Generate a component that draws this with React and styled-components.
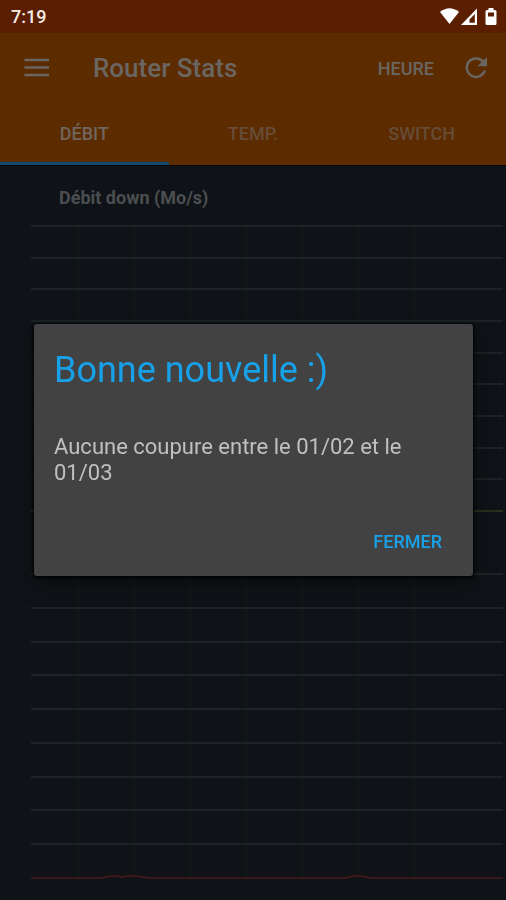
import { useState } from "react";
import styled, { createGlobalStyle } from "styled-components";

const GlobalStyle = createGlobalStyle`
  * {
    box-sizing: border-box;
  }
  body {
    margin: 0;
    background: #0f1317;
    font-family: Roboto, "Open Sans", sans-serif;
  }
  button {
    border: none;
    padding: 0;
    background: none;
    font-family: inherit;
    cursor: pointer;
  }
  h1, h2, p {
    margin: 0;
  }
`;

const Page = styled.div`
  min-height: 100vh;
  display: flex;
  flex-direction: column;
  border-bottom: 1px solid #000;
`;

const StatusBar = styled.div`
  height: 33px;
  padding: 0 8px 0 11px;
  display: flex;
  align-items: center;
  justify-content: space-between;
  background: #5b1e00;
  color: #f4ece8;
  font-size: 18px;
  font-weight: 500;
`;

const StatusIcons = styled.svg`
  width: 60px;
  height: 20px;
  fill: #fff;
`;

const Header = styled.header`
  background: #5c2b00;
  border-bottom: 1px solid #060606;
`;

const Toolbar = styled.div`
  height: 70px;
  padding: 0 16px 0 22px;
  display: flex;
  align-items: center;
`;

const Title = styled.h1`
  flex: 1;
  margin-left: 43px;
  color: #6a6662;
  font-size: 26px;
  font-weight: 500;
`;

const IconButton = styled.button`
  width: 28px;
  height: 28px;
  color: #6a6662;
  svg {
    display: block;
    width: 28px;
    height: 28px;
  }
`;

const TextButton = styled.button`
  margin-right: 28px;
  color: #6a6662;
  font-size: 18px;
  font-weight: 500;
`;

const Tabs = styled.nav`
  display: grid;
  grid-template-columns: repeat(3, 1fr);
`;

const Tab = styled.button`
  height: 62px;
  padding-top: 2px;
  border-bottom: 3px solid ${({ $active }) => ($active ? "#114b6c" : "transparent")};
  color: ${({ $active }) => ($active ? "#6f665f" : "#674c37")};
  font-size: 18px;
  font-weight: 500;
`;

const Content = styled.main`
  flex: 1;
  padding: 0 3px 21px 31px;
  display: flex;
  flex-direction: column;
  gap: 61px;
`;

const ChartTitle = styled.h2`
  height: 59px;
  padding-left: 28px;
  color: #4b4e50;
  font-size: 18px;
  font-weight: 700;
  line-height: 64px;
`;

const ChartSvg = styled.svg`
  display: block;
  width: 100%;
  height: ${({ $height }) => $height}px;
  path {
    fill: none;
    vector-effect: non-scaling-stroke;
  }
`;

const Overlay = styled.div`
  position: fixed;
  inset: 0;
  padding: 0 33px 0 34px;
  display: flex;
  align-items: center;
`;

const Dialog = styled.div`
  width: 100%;
  padding: 24px 20px 16px;
  display: flex;
  flex-direction: column;
  border-radius: 3px;
  background: #424242;
  box-shadow: 0 1px 3px 1px #000, 0 8px 20px 4px rgba(0, 0, 0, 0.3);
`;

const DialogTitle = styled.h2`
  color: #18a1e8;
  font-size: 36px;
  font-weight: 400;
  line-height: 44px;
`;

const DialogText = styled.p`
  margin: 42px 0 36px;
  color: #c0c0c0;
  font-size: 22px;
  line-height: 26px;
`;

const DialogButton = styled.button`
  align-self: flex-end;
  height: 38px;
  padding: 0 11px;
  color: #18a1e8;
  font-size: 18px;
  font-weight: 500;
`;

const TABS = [
  { id: "debit", label: "DÉBIT" },
  { id: "temp", label: "TEMP." },
  { id: "switch", label: "SWITCH" },
];

const COLUMNS = [47, 103, 159, 215, 271, 327, 383];

const Chart = ({ height, label, baseColor, series }) => {
  const bottom = height - 2;
  const rows = Array.from({ length: 9 }, (_, i) => Math.round((i * bottom) / 9));
  return (
    <ChartSvg
      $height={height}
      viewBox={`0 0 472 ${height}`}
      preserveAspectRatio="none"
      role="img"
      aria-label={label}
    >
      <path
        d={COLUMNS.map((x) => `M${x} 0V${bottom}`).join("")}
        stroke="#111718"
        strokeWidth="3"
      />
      <path
        d={rows.map((y) => `M0 ${y + 1}H472`).join("")}
        stroke="#1d2224"
        strokeWidth="2"
      />
      <path
        d={series || `M0 ${bottom + 1}H472`}
        stroke={baseColor}
        strokeWidth={series ? 1.5 : 2}
      />
    </ChartSvg>
  );
};

const App = () => {
  const [tab, setTab] = useState("debit");
  const [open, setOpen] = useState(true);

  return (
    <>
      <GlobalStyle />
      <Page>
        <StatusBar>
          <span>7:19</span>
          <StatusIcons viewBox="0 0 60 20" aria-hidden="true">
            <path d="M2 5Q11.5-2.500 21 5L11.5 17Z" />
            <path d="M39 1.500V18H23ZM36.800 7L31.500 12.500V15.800H36.800Z" fillRule="evenodd" />
            <path
              d="M50.5 1H55.5V3H57Q58.500 3 58.500 4.500V16.500Q58.500 18 57 18H49Q47.500 18 47.500 16.500V4.500Q47.500 3 49 3H50.500ZM50 5.500V9.500H56V5.500Z"
              fillRule="evenodd"
            />
          </StatusIcons>
        </StatusBar>
        <Header>
          <Toolbar>
            <IconButton aria-label="Menu">
              <svg viewBox="0 0 28 28" fill="none" stroke="currentColor" strokeWidth="2.6">
                <path d="M2.500 6H27M2.500 13.500H27M2.500 21H27" />
              </svg>
            </IconButton>
            <Title>Router Stats</Title>
            <TextButton>HEURE</TextButton>
            <IconButton aria-label="Actualiser">
              <svg viewBox="0 0 28 28" fill="currentColor">
                <path d="M21.500 6.200A10.500 10.500 0 1 0 24.200 16.500H21.500A8 8 0 1 1 19.600 8.100L15.500 12.300H25V3Z" />
              </svg>
            </IconButton>
          </Toolbar>
          <Tabs>
            {TABS.map((item) => (
              <Tab key={item.id} $active={tab === item.id} onClick={() => setTab(item.id)}>
                {item.label}
              </Tab>
            ))}
          </Tabs>
        </Header>
        <Content>
          <section>
            <ChartTitle>Débit down (Mo/s)</ChartTitle>
            <Chart height={287} label="Débit down" baseColor="#2b2e1c" />
          </section>
          <Chart
            height={306}
            label="Débit"
            baseColor="#4a1a1a"
            series="M0 305H70Q82 301.500 91 304Q102 301.500 118 305H315Q327 300.500 339 305H472"
          />
        </Content>
      </Page>
      {open && (
        <Overlay>
          <Dialog role="dialog" aria-modal="true" aria-labelledby="dialog-title">
            <DialogTitle id="dialog-title">Bonne nouvelle :)</DialogTitle>
            <DialogText>Aucune coupure entre le 01/02 et le 01/03</DialogText>
            <DialogButton onClick={() => setOpen(false)}>FERMER</DialogButton>
          </Dialog>
        </Overlay>
      )}
    </>
  );
};

export default App;
